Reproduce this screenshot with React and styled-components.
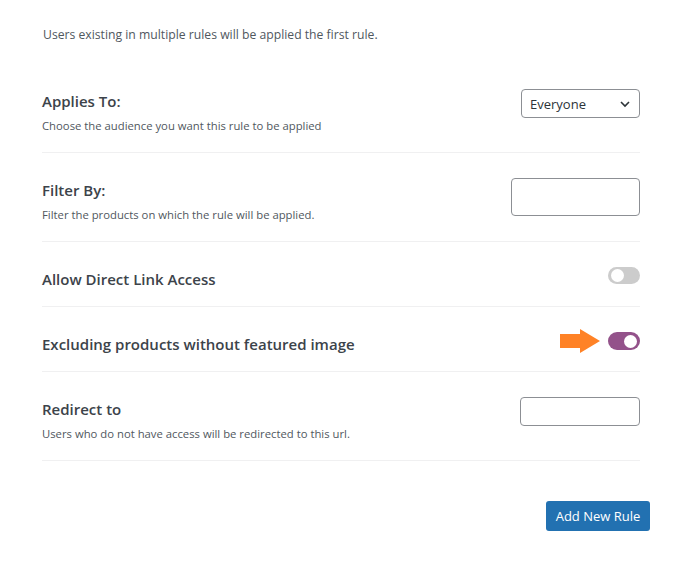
import React, { useState } from 'react';
import styled, { createGlobalStyle } from 'styled-components';

const GlobalStyle = createGlobalStyle`
  * { box-sizing: border-box; }
  body {
    margin: 0;
    background: #ffffff;
    font-family: "Open Sans", "Noto Sans", sans-serif;
    color: #3c434a;
  }
`;

const Page = styled.div`
  width: 686px;
  min-height: 561px;
  padding: 26px 0 0 42px;
`;

const Intro = styled.p`
  margin: 0 0 20px 1px;
  font-size: 12.2px;
  line-height: 18px;
  color: #50575e;
`;

const Rules = styled.div`
  width: 598px;
`;

const Row = styled.div`
  display: flex;
  justify-content: space-between;
  align-items: flex-start;
  padding: 25px 0 ${({ $tight }) => ($tight ? 15 : 17)}px;
  border-bottom: 1px solid #f0f0f1;
`;

const Info = styled.div`
  display: flex;
  flex-direction: column;
  gap: 4px;
`;

const Title = styled.div`
  font-size: 15px;
  font-weight: 600;
  line-height: 24px;
  color: #3c434a;
`;

const Desc = styled.div`
  font-size: 11.3px;
  line-height: 18px;
  color: #50575e;
`;

const Control = styled.div`
  position: relative;
  display: flex;
`;

const SelectBox = styled.div`
  width: 119px;
  height: 29px;
  border: 1px solid #8c8f94;
  border-radius: 4px;
  display: flex;
  align-items: center;
  justify-content: space-between;
  padding: 0 8px 0 8px;
  font-size: 13px;
  color: #2c3338;
`;

const TextInput = styled.input`
  width: ${({ $w }) => $w}px;
  height: ${({ $h }) => $h}px;
  border: 1px solid #8c8f94;
  border-radius: 4px;
  background: #fff;
  outline: none;
`;

const Track = styled.button`
  width: 32px;
  height: ${({ $on }) => ($on ? 18 : 17)}px;
  border: none;
  border-radius: 10px;
  background: ${({ $on }) => ($on ? '#93528a' : '#cccccc')};
  display: flex;
  align-items: center;
  justify-content: ${({ $on }) => ($on ? 'flex-end' : 'flex-start')};
  padding: 0 3px;
  cursor: pointer;
`;

const Knob = styled.span`
  width: 13px;
  height: 13px;
  border-radius: 50%;
  background: #ffffff;
`;

/* annotation arrow drawn over the row, pointing at the toggle */
const ArrowMark = styled.svg`
  position: absolute;
  left: -48px;
  top: -3px;
`;

const Footer = styled.div`
  width: 608px;
  display: flex;
  justify-content: flex-end;
  padding-top: 40px;
`;

const AddButton = styled.button`
  width: 104px;
  height: 30px;
  border: none;
  border-radius: 3px;
  background: #2271b1;
  color: #ffffff;
  font-family: inherit;
  font-size: 13px;
  cursor: pointer;
`;

const Toggle = ({ on, onClick }) => (
  <Track $on={on} onClick={onClick}>
    <Knob />
  </Track>
);

const Arrow = () => (
  <ArrowMark width="40" height="24" viewBox="0 0 40 24">
    <path d="M0 5h20V0l20 12-20 12v-5H0z" fill="#ff8226" />
  </ArrowMark>
);

const Chevron = () => (
  <svg width="12" height="12" viewBox="0 0 12 12">
    <path d="M2 4l4 4 4-4" stroke="#2c3338" strokeWidth="1.6" fill="none" />
  </svg>
);

const App = () => {
  const [direct, setDirect] = useState(false);
  const [exclude, setExclude] = useState(true);

  return (
    <Page>
      <GlobalStyle />
      <Intro>Users existing in multiple rules will be applied the first rule.</Intro>
      <Rules>
        <Row>
          <Info>
            <Title>Applies To:</Title>
            <Desc>Choose the audience you want this rule to be applied</Desc>
          </Info>
          <SelectBox>
            Everyone
            <Chevron />
          </SelectBox>
        </Row>
        <Row>
          <Info>
            <Title>Filter By:</Title>
            <Desc>Filter the products on which the rule will be applied.</Desc>
          </Info>
          <TextInput $w={129} $h={38} />
        </Row>
        <Row $tight>
          <Info>
            <Title>Allow Direct Link Access</Title>
          </Info>
          <Control>
            <Toggle on={direct} onClick={() => setDirect(!direct)} />
          </Control>
        </Row>
        <Row $tight>
          <Info>
            <Title>Excluding products without featured image</Title>
          </Info>
          <Control>
            <Arrow />
            <Toggle on={exclude} onClick={() => setExclude(!exclude)} />
          </Control>
        </Row>
        <Row>
          <Info>
            <Title>Redirect to</Title>
            <Desc>Users who do not have access will be redirected to this url.</Desc>
          </Info>
          <TextInput $w={120} $h={29} />
        </Row>
      </Rules>
      <Footer>
        <AddButton>Add New Rule</AddButton>
      </Footer>
    </Page>
  );
};

export default App;
